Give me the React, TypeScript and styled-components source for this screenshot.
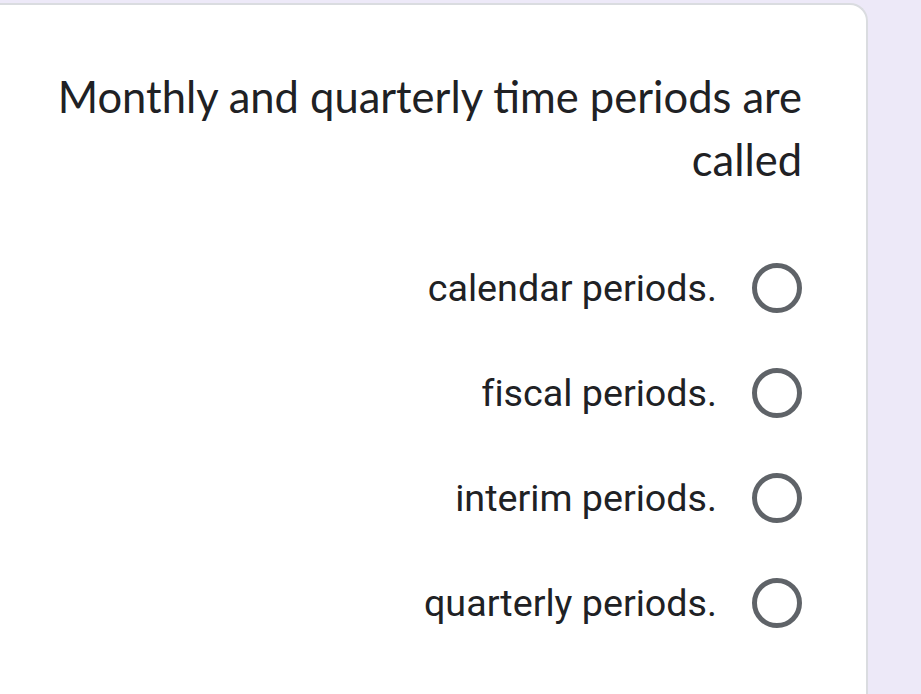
import * as React from 'react';
import styled, { createGlobalStyle } from 'styled-components';

const GlobalStyle = createGlobalStyle`
  html, body {
    margin: 0;
    padding: 0;
    background: #ede9f8;
  }
  body {
    width: 921px;
    height: 694px;
    overflow: hidden;
  }
`;

const Page = styled.div`
  width: 921px;
  height: 694px;
  padding-top: 3px;
  box-sizing: border-box;
  direction: rtl;
`;

const Card = styled.div`
  margin-right: 53px;
  height: 720px;
  background: #ffffff;
  border: 2px solid #dadce0;
  border-left: none;
  border-bottom: none;
  border-top-right-radius: 18px;
  padding: 60px 64px 0 0;
  box-sizing: border-box;
`;

const Title = styled.div`
  width: 770px;
  font-family: 'Lato', 'Roboto', sans-serif;
  font-size: 43.5px;
  line-height: 63px;
  color: #202124;
  text-align: right;
  direction: ltr;
  margin-left: auto;
  margin-right: 0;
`;

const Options = styled.div`
  margin-top: 44px;
  display: flex;
  flex-direction: column;
`;

const Option = styled.label`
  height: 105px;
  display: flex;
  align-items: center;
  gap: 35px;
  direction: rtl;
`;

const Radio = styled.span`
  width: 50px;
  height: 50px;
  box-sizing: border-box;
  border: 5px solid #5f6368;
  border-radius: 50%;
  flex: none;
`;

const OptionText = styled.span`
  font-family: 'Roboto', sans-serif;
  font-size: 37.7px;
  color: #202124;
  direction: ltr;
  font-variant-ligatures: none;
`;

const options = ['calendar periods.', 'fiscal periods.', 'interim periods.', 'quarterly periods.'];

export default function App() {
  return (
    <Page>
      <GlobalStyle />
      <Card>
        <Title>Monthly and quarterly time periods are called</Title>
        <Options>
          {options.map((o) => (
            <Option key={o}>
              <Radio />
              <OptionText>{o}</OptionText>
            </Option>
          ))}
        </Options>
      </Card>
    </Page>
  );
}
